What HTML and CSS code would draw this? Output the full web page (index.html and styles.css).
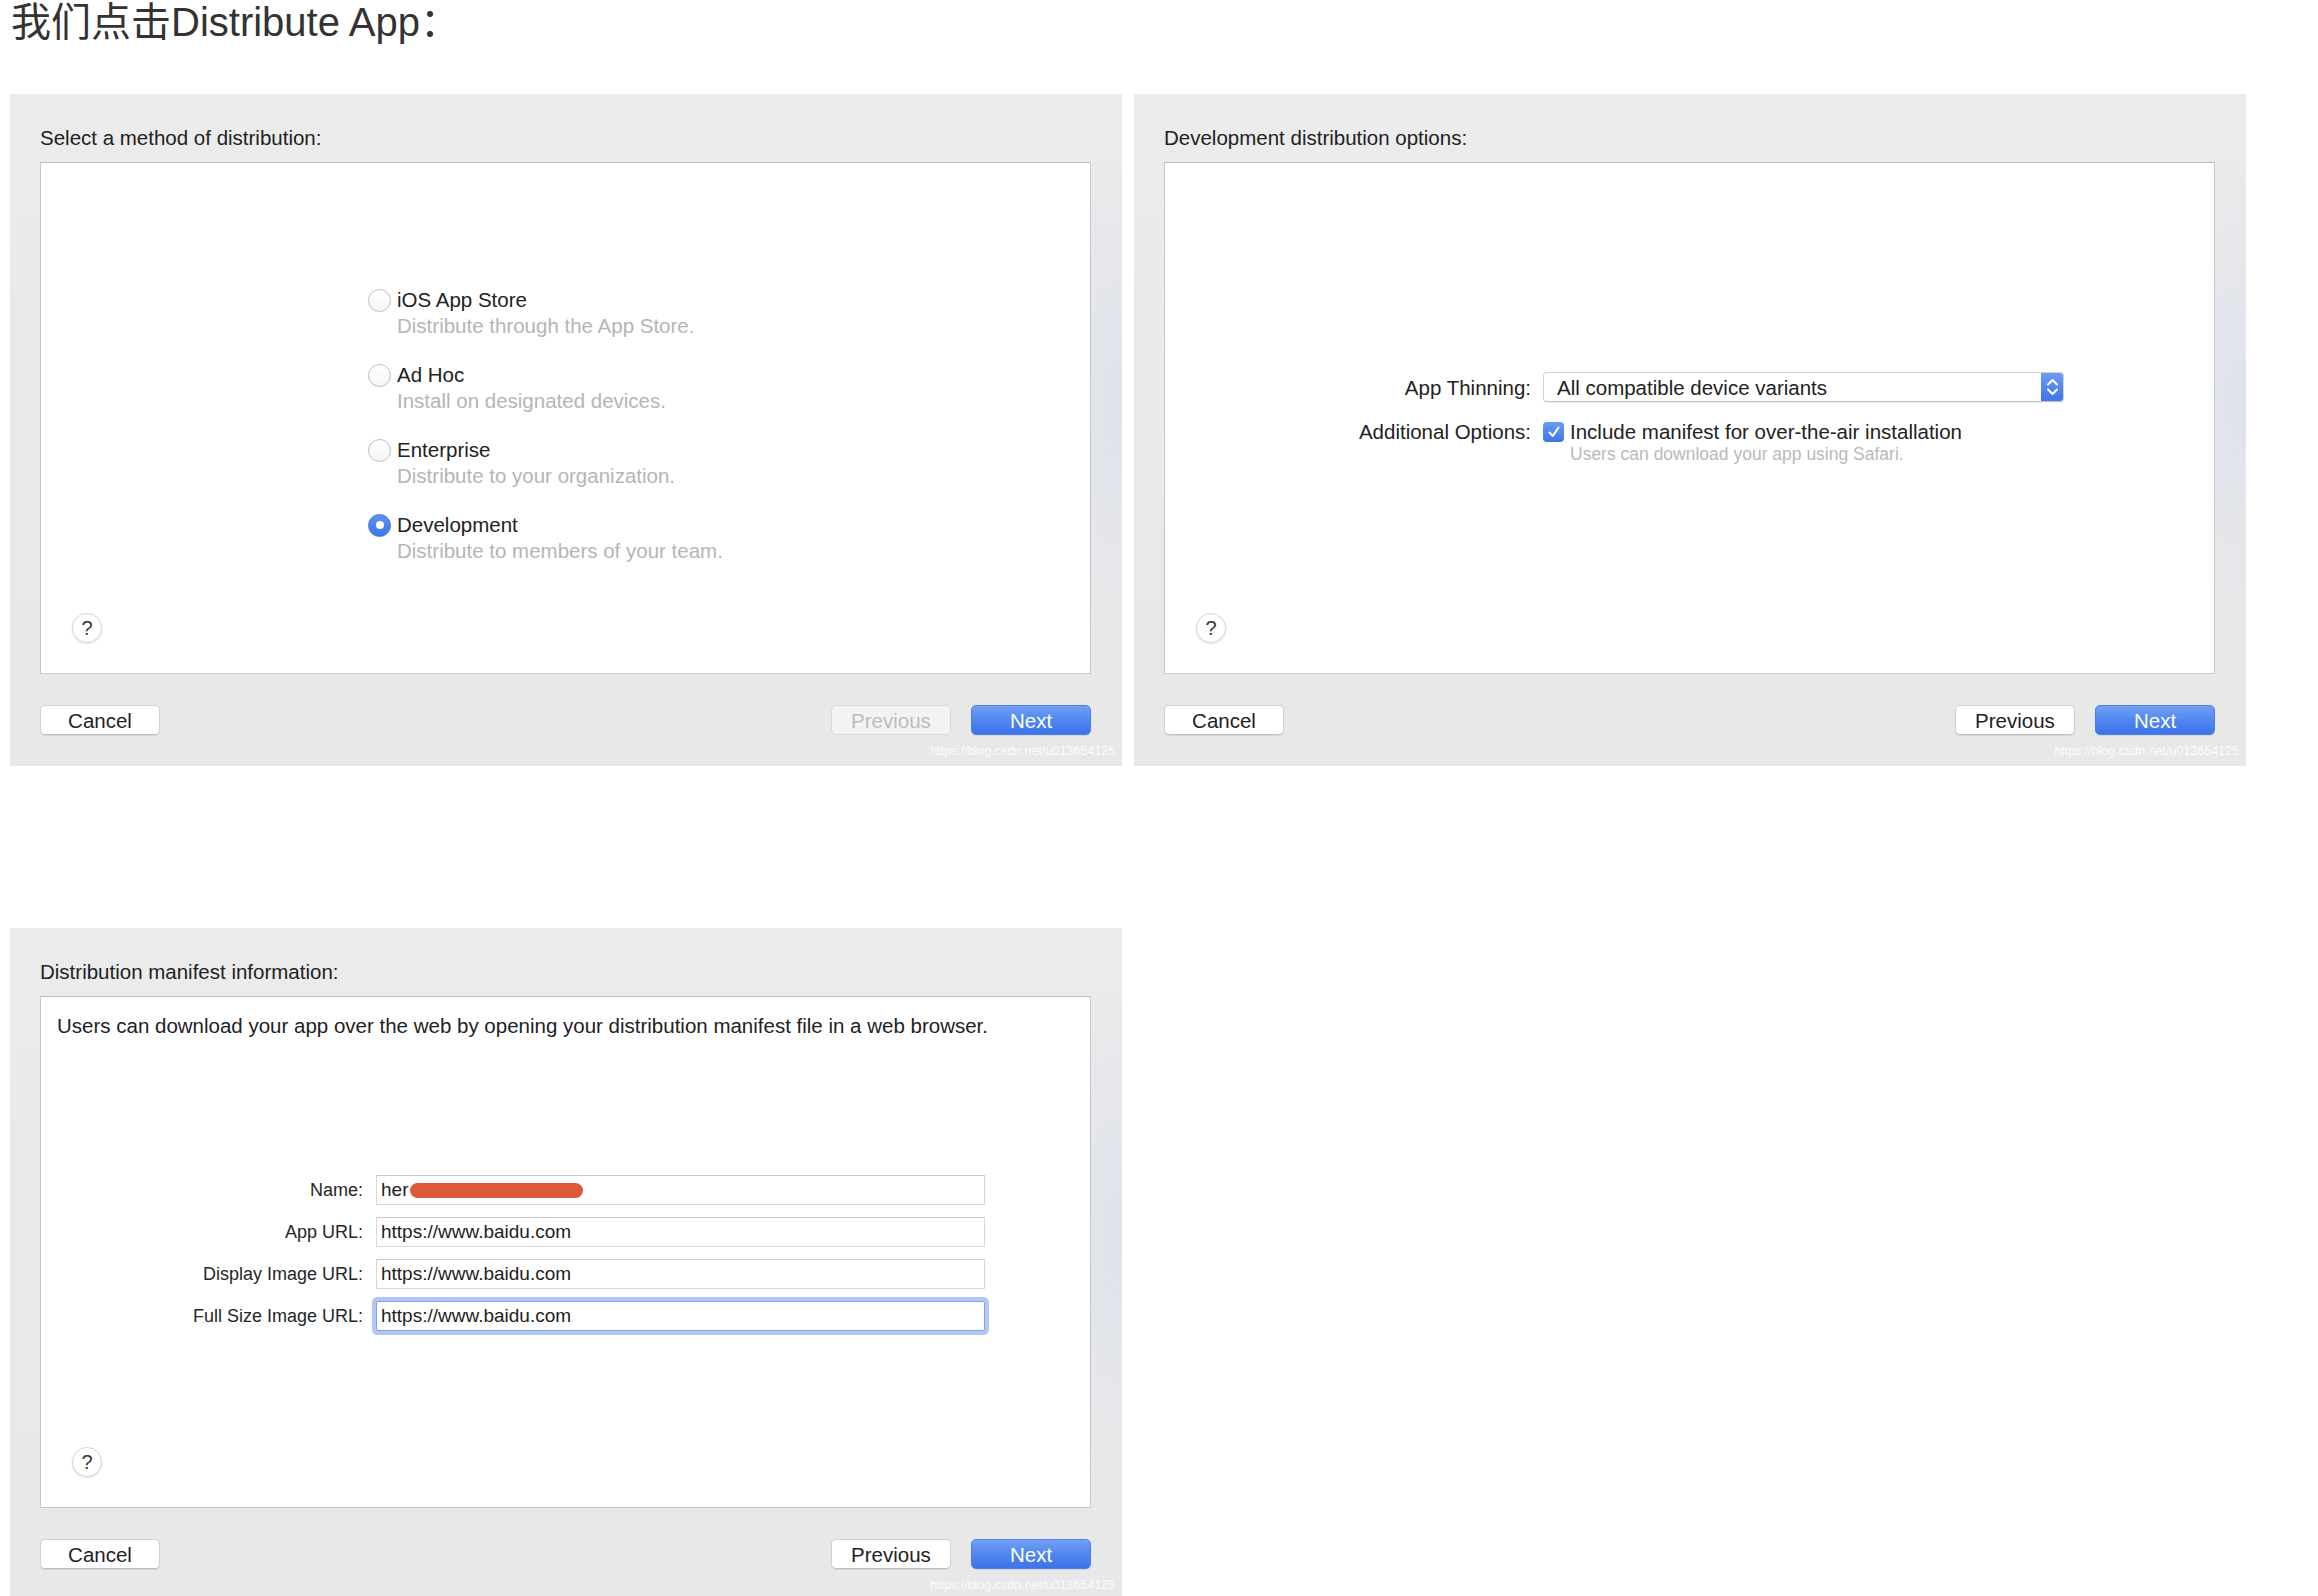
FILE: index.html
```html
<!DOCTYPE html>
<html lang="zh-CN">
<head>
<meta charset="utf-8">
<title>Distribute App</title>
<link rel="stylesheet" href="styles.css">
</head>
<body>
<h1 class="page-title">我们点击Distribute App：</h1>

<div class="panel-row">
  <section class="panel">
    <div class="panel-title">Select a method of distribution:</div>
    <div class="sheet">
      <div class="methods">
        <div class="method">
          <div class="method-head"><span class="radio"></span><span>iOS App Store</span></div>
          <div class="method-desc">Distribute through the App Store.</div>
        </div>
        <div class="method">
          <div class="method-head"><span class="radio"></span><span>Ad Hoc</span></div>
          <div class="method-desc">Install on designated devices.</div>
        </div>
        <div class="method">
          <div class="method-head"><span class="radio"></span><span>Enterprise</span></div>
          <div class="method-desc">Distribute to your organization.</div>
        </div>
        <div class="method">
          <div class="method-head"><span class="radio radio-on"></span><span>Development</span></div>
          <div class="method-desc">Distribute to members of your team.</div>
        </div>
      </div>
      <div class="help">?</div>
    </div>
    <div class="actions">
      <div class="btn">Cancel</div>
      <div class="actions-right">
        <div class="btn btn-disabled">Previous</div>
        <div class="btn btn-primary">Next</div>
      </div>
    </div>
    <div class="watermark">https://blog.csdn.net/u013654125</div>
  </section>

  <section class="panel">
    <div class="panel-title">Development distribution options:</div>
    <div class="sheet">
      <div class="opt-grid">
        <div class="opt-label opt-label-popup">App Thinning:</div>
        <div class="popup">
          <span class="popup-text">All compatible device variants</span>
          <span class="popup-stepper">
            <svg width="23" height="30" viewBox="0 0 23 30"><path d="M7 12.5 L11.5 8 L16 12.5 M7 17.5 L11.5 22 L16 17.5" fill="none" stroke="#fff" stroke-width="2" stroke-linecap="round" stroke-linejoin="round"/></svg>
          </span>
        </div>
        <div class="opt-label">Additional Options:</div>
        <div class="opt-check">
          <div class="check-line">
            <span class="checkbox"><svg width="20" height="20" viewBox="0 0 20 20"><path d="M5.5 10.5 L8.8 14 L14.5 5.5" fill="none" stroke="#fff" stroke-width="2" stroke-linecap="round" stroke-linejoin="round"/></svg></span>
            <span>Include manifest for over-the-air installation</span>
          </div>
          <div class="check-note">Users can download your app using Safari.</div>
        </div>
      </div>
      <div class="help">?</div>
    </div>
    <div class="actions">
      <div class="btn">Cancel</div>
      <div class="actions-right">
        <div class="btn">Previous</div>
        <div class="btn btn-primary">Next</div>
      </div>
    </div>
    <div class="watermark">https://blog.csdn.net/u013654125</div>
  </section>
</div>

<div class="panel-row panel-row-second">
  <section class="panel">
    <div class="panel-title">Distribution manifest information:</div>
    <div class="sheet">
      <p class="manifest-intro">Users can download your app over the web by opening your distribution manifest file in a web browser.</p>
      <div class="manifest-form">
        <div class="form-label">Name:</div>
        <div class="field">her<span class="redact"></span></div>
        <div class="form-label">App URL:</div>
        <div class="field">https://www.baidu.com</div>
        <div class="form-label">Display Image URL:</div>
        <div class="field">https://www.baidu.com</div>
        <div class="form-label">Full Size Image URL:</div>
        <div class="field field-focus">https://www.baidu.com</div>
      </div>
      <div class="help">?</div>
    </div>
    <div class="actions">
      <div class="btn">Cancel</div>
      <div class="actions-right">
        <div class="btn">Previous</div>
        <div class="btn btn-primary">Next</div>
      </div>
    </div>
    <div class="watermark">https://blog.csdn.net/u013654125</div>
  </section>
</div>
</body>
</html>
```

FILE: styles.css
```css
* { box-sizing: border-box; }

html, body {
  margin: 0;
  background: #ffffff;
}

body {
  width: 2318px;
  height: 1596px;
  overflow: hidden;
  padding-left: 10px;
  font-family: "Liberation Sans", "Noto Sans CJK SC", sans-serif;
  color: #262626;
}

.page-title {
  margin: 0 0 50px 0;
  padding: 0 0 0 1px;
  font-size: 40px;
  line-height: 44px;
  font-weight: normal;
  color: #333333;
}

.panel-row {
  display: flex;
  gap: 12px;
}

.panel-row-second {
  margin-top: 162px;
}

.panel {
  position: relative;
  width: 1112px;
  height: 672px;
  flex: none;
  padding: 32px 31px 31px 30px;
  display: flex;
  flex-direction: column;
  background:
    radial-gradient(ellipse 120px 260px at 100% 45%, rgba(214, 222, 238, 0.55), rgba(214, 222, 238, 0) 100%),
    linear-gradient(180deg, #ececec 0%, #e9e9e9 40%, #e8e8e8 100%);
}

.panel-title {
  height: 24px;
  margin-bottom: 12px;
  font-size: 20.5px;
  line-height: 24px;
  color: #222222;
}

.sheet {
  height: 512px;
  flex: none;
  background: #ffffff;
  border: 1px solid #c8c8c8;
  border-top-color: #bdbdbd;
  display: flex;
  flex-direction: column;
}

/* ---------- panel 1 : methods ---------- */
.methods {
  margin: 125px 0 0 327px;
}

.method {
  margin-bottom: 25px;
}

.method-head {
  display: flex;
  align-items: center;
  gap: 6px;
  height: 24px;
  font-size: 20.5px;
  line-height: 24px;
  color: #222222;
}

.radio {
  width: 23px;
  height: 23px;
  flex: none;
  border-radius: 50%;
  border: 1px solid #bdbdbd;
  background: linear-gradient(180deg, #ffffff, #f6f6f6);
  display: flex;
  align-items: center;
  justify-content: center;
}

.radio-on {
  border-color: #3f78e2;
  background: linear-gradient(180deg, #5b92ef, #3f77e9);
}

.radio-on::after {
  content: "";
  width: 8px;
  height: 8px;
  border-radius: 50%;
  background: #ffffff;
}

.method-desc {
  margin: 2px 0 0 29px;
  font-size: 20.5px;
  line-height: 24px;
  color: #b5b5b5;
}

/* ---------- help button ---------- */
.help {
  margin: auto 0 30px 31px;
  align-self: flex-start;
  width: 30px;
  height: 30px;
  border-radius: 50%;
  border: 1px solid #d6d6d6;
  background: #ffffff;
  box-shadow: 0 1px 2px rgba(0, 0, 0, 0.12);
  font-size: 20px;
  line-height: 28px;
  text-align: center;
  color: #333333;
}

/* ---------- buttons ---------- */
.actions {
  margin-top: 31px;
  height: 30px;
  display: flex;
  justify-content: space-between;
}

.actions-right {
  display: flex;
  gap: 20px;
}

.btn {
  width: 120px;
  height: 30px;
  border-radius: 5px;
  border: 1px solid #d0d0d0;
  border-bottom-color: #bdbdbd;
  background: #ffffff;
  box-shadow: 0 1px 1px rgba(0, 0, 0, 0.08);
  font-size: 20.5px;
  line-height: 29px;
  text-align: center;
  color: #222222;
}

.btn-disabled {
  background: #f3f3f3;
  border-color: #dadada;
  color: #bcbcbc;
  box-shadow: none;
}

.btn-primary {
  border-color: #4a7ee8;
  background: linear-gradient(180deg, #72a0f2 0%, #5187ee 50%, #3e72eb 100%);
  color: #ffffff;
}

.watermark {
  position: absolute;
  right: 7px;
  bottom: 8px;
  font-size: 12.5px;
  line-height: 14px;
  color: rgba(255, 255, 255, 0.85);
}

/* ---------- panel 2 : options ---------- */
.opt-grid {
  margin: 209px 0 0 166px;
  display: grid;
  grid-template-columns: 200px 521px;
  column-gap: 12px;
  row-gap: 17px;
  font-size: 20.5px;
}

.opt-label {
  text-align: right;
  line-height: 24px;
  color: #222222;
}

.opt-label-popup {
  line-height: 30px;
  padding-top: 1px;
}

.popup {
  height: 30px;
  display: flex;
  align-items: stretch;
  border: 1px solid #d3d3d3;
  border-bottom-color: #c2c2c2;
  border-radius: 4px;
  background: #ffffff;
  box-shadow: 0 1px 1px rgba(0, 0, 0, 0.06);
  overflow: hidden;
}

.popup-text {
  flex: 1;
  padding-left: 13px;
  line-height: 29px;
  color: #222222;
}

.popup-stepper {
  width: 23px;
  flex: none;
  display: flex;
  align-items: center;
  justify-content: center;
  margin: -1px -1px -1px 0;
  background: linear-gradient(180deg, #6e9df1 0%, #3f73eb 100%);
}

.check-line {
  display: flex;
  align-items: center;
  gap: 6px;
  height: 24px;
  line-height: 24px;
  color: #222222;
}

.checkbox {
  width: 21px;
  height: 20px;
  flex: none;
  border-radius: 4px;
  background: linear-gradient(180deg, #6a9af0, #3f75ea);
  display: flex;
  align-items: center;
  justify-content: center;
}

.check-note {
  margin-left: 27px;
  font-size: 17.5px;
  line-height: 20px;
  color: #b9b9b9;
}

/* ---------- panel 3 : manifest ---------- */
.manifest-intro {
  margin: 17px 0 0 16px;
  font-size: 20.5px;
  line-height: 24px;
  color: #222222;
}

.manifest-form {
  margin-top: 137px;
  display: grid;
  grid-template-columns: 322px 609px;
  grid-auto-rows: 30px;
  column-gap: 13px;
  row-gap: 12px;
}

.form-label {
  text-align: right;
  font-size: 18px;
  line-height: 30px;
  color: #262626;
}

.field {
  height: 30px;
  padding-left: 4px;
  border: 1px solid #d7d7d7;
  border-top-color: #c9c9c9;
  background: #ffffff;
  font-size: 19px;
  line-height: 28px;
  color: #222222;
  white-space: nowrap;
}

.field-focus {
  border-color: #7fa2e8;
  border-radius: 2px;
  box-shadow: 0 0 0 4px rgba(126, 162, 236, 0.6);
}

.redact {
  display: inline-block;
  width: 173px;
  height: 15px;
  margin-left: 2px;
  border-radius: 8px;
  background: #dc5a37;
  vertical-align: middle;
}
```
